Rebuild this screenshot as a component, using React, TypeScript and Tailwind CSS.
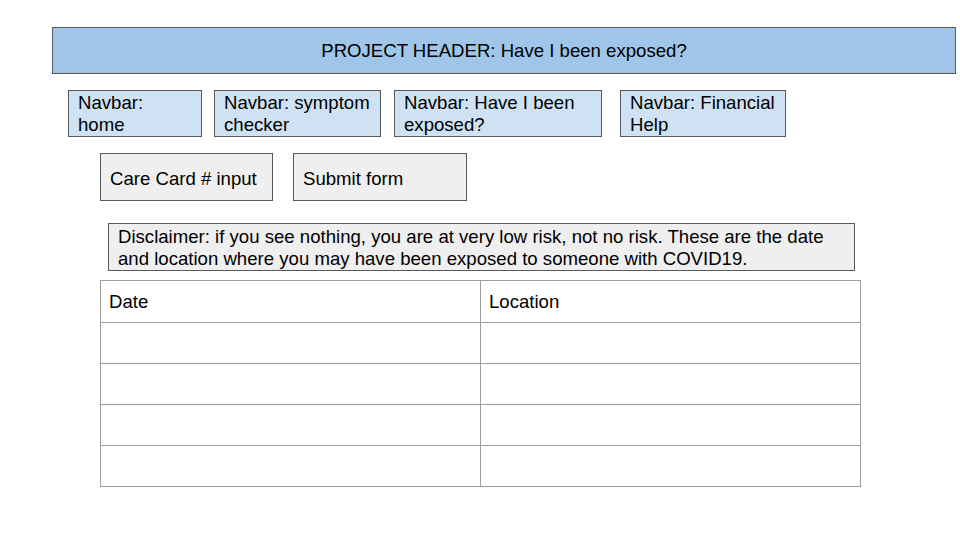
const nav = [
  { t: "Navbar: home", w: "w-[134px]", ml: "ml-[68px]" },
  { t: "Navbar: symptom checker", w: "w-[167px]", ml: "ml-[12px]" },
  { t: "Navbar: Have I been exposed?", w: "w-[208px]", ml: "ml-[13px]" },
  { t: "Navbar: Financial Help", w: "w-[166px]", ml: "ml-[18px]" },
];

export default function App() {
  const rows = [0, 1, 2, 3];
  return (
    <div className="h-[540px] w-[960px] overflow-hidden bg-white font-['Liberation_Sans',Arial,sans-serif] text-[18.6px] leading-[22px] text-black">
      {/* header */}
      <div className="ml-[52px] mt-[27px] flex h-[47px] w-[904px] items-center justify-center border border-[#595959] bg-[#9fc5e8]">
        PROJECT HEADER: Have I been exposed?
      </div>

      {/* navbar */}
      <div className="mt-[16px] flex">
        {nav.map((n) => (
          <div key={n.t} className={`${n.ml} ${n.w} h-[47px] border border-[#595959] bg-[#cfe2f3] px-[9px] pt-[1px] leading-[22px]`}>
            {n.t}
          </div>
        ))}
      </div>

      {/* form */}
      <div className="ml-[100px] mt-[16px] flex gap-[20px]">
        <div className="flex h-[48px] w-[173px] items-center border border-[#595959] bg-[#efefef] px-[9px] pt-[3px]">Care Card # input</div>
        <div className="flex h-[48px] w-[174px] items-center border border-[#595959] bg-[#efefef] px-[9px] pt-[3px]">Submit form</div>
      </div>

      {/* disclaimer */}
      <div className="ml-[108px] mt-[22px] h-[48px] w-[747px] border border-[#595959] bg-[#efefef] px-[9px] pt-[2px]">
        Disclaimer: if you see nothing, you are at very low risk, not no risk. These are the date and location where you may have been exposed to someone with COVID19.
      </div>

      {/* table */}
      <table className="ml-[100px] mt-[9px] w-[761px] table-fixed border-collapse">
        <tbody>
          <tr className="h-[42px]">
            <td className="w-[380px] border border-[#9e9e9e] px-[8px]">Date</td>
            <td className="border border-[#9e9e9e] px-[8px]">Location</td>
          </tr>
          {rows.map((r) => (
            <tr key={r} className="h-[41px]">
              <td className="border border-[#9e9e9e]"></td>
              <td className="border border-[#9e9e9e]"></td>
            </tr>
          ))}
        </tbody>
      </table>
    </div>
  );
}
